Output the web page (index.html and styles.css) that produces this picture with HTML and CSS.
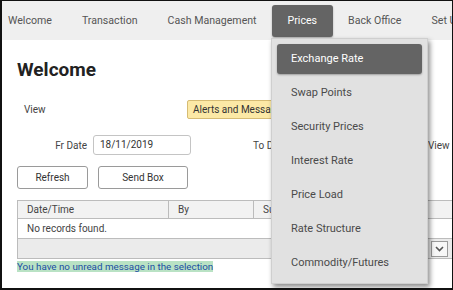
FILE: index.html
```html
<!DOCTYPE html>
<html lang="en">
<head>
    <meta charset="UTF-8">
    <title>Welcome</title>
    <link rel="stylesheet" href="styles.css">
</head>
<body>
    <div class="frame">
        <div class="nav">
            <span class="nav-item first">Welcome</span>
            <span class="nav-item">Transaction</span>
            <span class="nav-item">Cash Management</span>
            <span class="nav-item active">Prices</span>
            <span class="nav-item">Back Office</span>
            <span class="nav-item">Set Up</span>
        </div>

        <div class="content">
            <h1>Welcome</h1>

            <div class="row view-row">
                <span class="lbl-view">View</span>
                <span class="select-yellow">Alerts and Messages</span>
            </div>

            <div class="row date-row">
                <span class="lbl-date">Fr Date</span>
                <span class="input">18/11/2019</span>
                <span class="lbl-to">To Date</span>
                <span class="lbl-view2">View</span>
            </div>

            <div class="row btn-row">
                <button class="btn refresh">Refresh</button>
                <button class="btn sendbox">Send Box</button>
            </div>

            <div class="grid">
                <div class="grid-head">
                    <span class="col c1">Date/Time</span>
                    <span class="col c2">By</span>
                    <span class="col c3">Subject</span>
                </div>
                <div class="grid-row">No records found.</div>
                <div class="grid-foot">
                    <span class="pager"><svg width="9" height="6" viewBox="0 0 9 6"><path d="M1 1 L4.5 4.5 L8 1" fill="none" stroke="#555" stroke-width="1.6"/></svg></span>
                </div>
            </div>

            <div class="note"><span>You have no unread message in the selection</span></div>
        </div>

        <div class="menu">
            <div class="menu-item active">Exchange Rate</div>
            <div class="menu-item">Swap Points</div>
            <div class="menu-item">Security Prices</div>
            <div class="menu-item">Interest Rate</div>
            <div class="menu-item">Price Load</div>
            <div class="menu-item">Rate Structure</div>
            <div class="menu-item">Commodity/Futures</div>
        </div>
    </div>
</body>
</html>
```

FILE: styles.css
```css
body {
    margin: 0;
    font-family: Roboto, "Liberation Sans", sans-serif;
    color: #444;
}
.frame {
    position: relative;
    width: 453px;
    height: 290px;
    box-sizing: border-box;
    border: 1px solid #111;
    border-left-width: 2px;
    border-bottom-width: 2px;
    overflow: hidden;
    background: #fff;
}
.nav {
    display: flex;
    align-items: center;
    height: 39px;
    background: #efefef;
    margin-left: -1px;
    white-space: nowrap;
    font-size: 10.6px;
    color: #555;
}
.nav-item {
    padding: 0 15px;
    line-height: 32px;
    height: 32px;
}
.nav-item.first {
    padding-left: 7px;
}
.nav-item.active {
    background: #646464;
    color: #fff;
    border-radius: 3px;
    padding: 0 16px;
    box-shadow: 0 1px 2px rgba(0,0,0,0.3);
}
.content {
    padding-left: 15px;
}
h1 {
    margin: 19px 0 0 0;
    font-size: 19px;
    font-weight: bold;
    color: #222;
    line-height: 22px;
    height: 22px;
}
.row {
    display: flex;
    align-items: center;
    font-size: 10px;
    color: #444;
    white-space: nowrap;
}
.view-row {
    margin-top: 19px;
    height: 19px;
}
.lbl-view {
    width: 163px;
    padding-left: 7px;
}
.select-yellow {
    display: block;
    height: 17px;
    line-height: 17px;
    padding: 0 5px;
    background: #fce9a6;
    border: 1px solid #d6bc74;
    border-radius: 2px;
    color: #333;
    width: 120px;
}
.date-row {
    margin-top: 16px;
    height: 20px;
}
.lbl-date {
    width: 70px;
    text-align: right;
    padding-right: 6px;
}
.input {
    display: block;
    width: 90px;
    height: 18px;
    line-height: 18px;
    padding-left: 6px;
    border: 1px solid #c4c4c4;
    border-radius: 3px;
    color: #333;
}
.lbl-to {
    margin-left: 62px;
    width: 175px;
}
.btn-row {
    margin-top: 11px;
    gap: 10px;
}
.btn {
    height: 23px;
    background: #fff;
    border: 1px solid #9a9a9a;
    border-radius: 3px;
    font-family: Roboto, "Liberation Sans", sans-serif;
    font-size: 10px;
    color: #333;
    padding: 0;
}
.refresh {
    width: 71px;
}
.sendbox {
    width: 90px;
}
.grid {
    margin-top: 11px;
    border: 1px solid #bcbcbc;
    border-right: none;
    font-size: 10px;
    color: #444;
}
.grid-head {
    display: flex;
    height: 17px;
    line-height: 17px;
    background: #f2f2f2;
    border-bottom: 1px solid #bcbcbc;
}
.col {
    padding-left: 9px;
    border-right: 1px solid #bcbcbc;
}
.c1 {
    width: 141px;
}
.c2 {
    width: 75px;
}
.c3 {
    border-right: none;
    flex: 1;
}
.grid-row {
    height: 19px;
    line-height: 19px;
    padding-left: 9px;
    border-bottom: 1px solid #bcbcbc;
}
.grid-foot {
    display: flex;
    justify-content: flex-end;
    align-items: center;
    height: 19px;
    background: #ebebeb;
    padding-right: 4px;
}
.pager {
    display: flex;
    align-items: center;
    justify-content: center;
    width: 15px;
    height: 14px;
    border: 1px solid #9a9a9a;
    background: #f7f7f7;
}
.note {
    margin-top: 2px;
    font-size: 9.8px;
    line-height: 11px;
}
.note span {
    background: #b9e2c4;
    color: #1b4ea3;
}
.menu {
    position: absolute;
    left: 269px;
    top: 37px;
    width: 145px;
    padding: 5px;
    background: #e1e1e1;
    border: 1px solid #cfcfcf;
    box-shadow: 2px 3px 5px rgba(0,0,0,0.45);
    display: flex;
    flex-direction: column;
    gap: 4px;
}
.menu-item {
    height: 30px;
    line-height: 30px;
    padding-left: 14px;
    font-size: 11px;
    color: #4a4a4a;
    border-radius: 3px;
}
.menu-item.active {
    background: #646464;
    color: #fff;
    box-shadow: 0 1px 2px rgba(0,0,0,0.3);
}
```
